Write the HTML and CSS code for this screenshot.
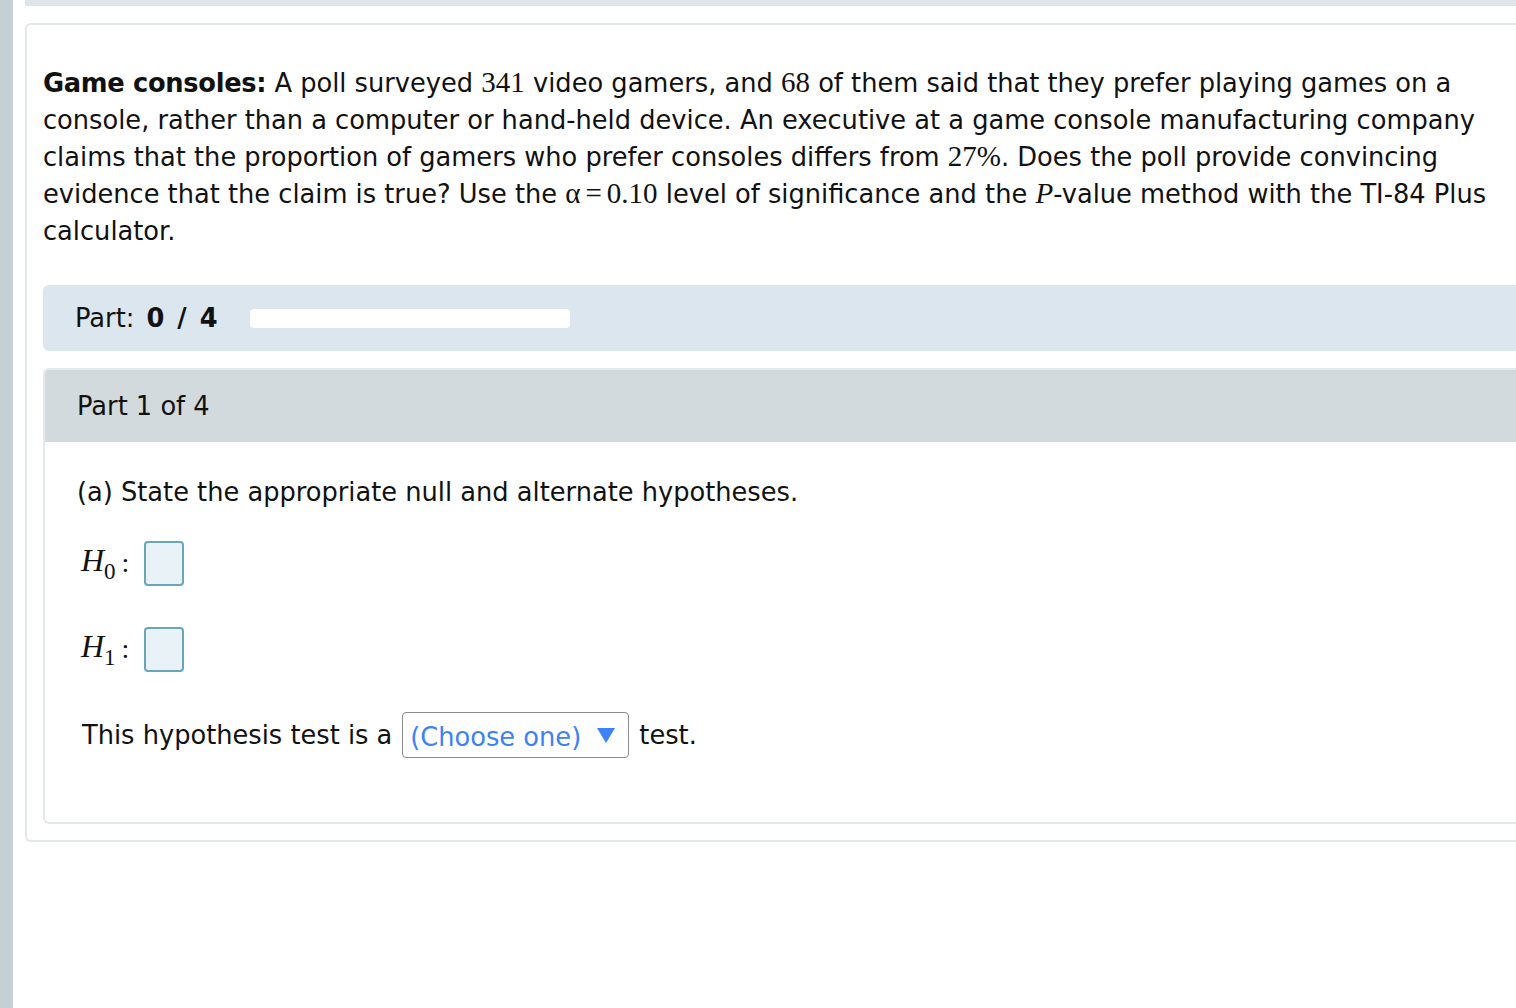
FILE: index.html
```html
<!DOCTYPE html>
<html>
<head>
<meta charset="utf-8">
<link rel="stylesheet" href="styles.css">
</head>
<body>
<div class="layout">
  <div class="sidebar"></div>
  <div class="main">
    <div class="topbar"></div>
    <div class="card">
      <p class="problem"><b>Game consoles:</b> A poll surveyed <span class="m">341</span> video gamers, and <span class="m">68</span> of them said that they prefer playing games on a console, rather than a computer or hand-held device. An executive at a game console manufacturing company claims that the proportion of gamers who prefer consoles differs from <span class="m">27%</span>. Does the poll provide convincing evidence that the claim is true? Use the <span class="m">α<span class="eq">=</span>0.10</span> level of significance and the <span class="m"><i>P</i></span>-value method with the TI-84 Plus calculator.</p>
      <div class="progress">
        <span class="plabel">Part: <b>0 / 4</b></span>
        <div class="pbar"></div>
      </div>
      <div class="partbox">
        <div class="parthead">Part 1 of 4</div>
        <div class="partbody">
          <p class="q">(a) State the appropriate null and alternate hypotheses.</p>
          <div class="hyp"><span class="m hv"><i>H</i><sub>0</sub></span><span class="m colon">:</span><span class="ansbox"></span></div>
          <div class="hyp"><span class="m hv"><i>H</i><sub>1</sub></span><span class="m colon">:</span><span class="ansbox"></span></div>
          <div class="testline">This hypothesis test is a <span class="select"><span class="seltext">(Choose one)</span><svg class="tri" width="18" height="16" viewBox="0 0 18 16"><polygon points="0,0 18,0 9,15" fill="#3d82f4"/></svg></span> test.</div>
        </div>
      </div>
    </div>
  </div>
</div>
</body>
</html>
```
FILE: styles.css
```css
html, body { margin: 0; padding: 0; background: #fff; }
body { font-family: "DejaVu Sans", Verdana, sans-serif; color: #111; }
.layout { display: flex; min-height: 1008px; }
.sidebar { width: 13px; background: #c5d0d5; flex: none; }
.main { flex: 1; padding-left: 12px; overflow: hidden; }
.topbar { height: 6px; background: #dee4e8; }
.card {
  margin-top: 17px;
  border: 2px solid #e3e8eb;
  border-right: none;
  border-radius: 6px 0 0 6px;
  padding: 0 0 16px 16px;
}
.problem {
  margin: 0;
  padding-top: 40px;
  font-size: 25.7px;
  line-height: 37px;
  width: 1475px;
}
.problem b { letter-spacing: -0.3px; }
.m { font-family: "Liberation Serif", "Times New Roman", serif; font-size: 29px; line-height: 1; }
.m i { font-style: italic; }
.eq { padding: 0 5px; }
.progress {
  margin-top: 35px;
  height: 66px;
  background: #dce6ee;
  border-radius: 6px 0 0 6px;
  display: flex;
  align-items: center;
  padding-left: 32px;
}
.plabel { font-size: 25.7px; }
.plabel b { font-weight: bold; word-spacing: 4px; margin-left: 4px; }
.pbar { width: 320px; height: 19px; background: #fff; border-radius: 4px; margin-left: 32px; }
.partbox {
  margin-top: 17px;
  border: 2px solid #e3e8eb;
  border-right: none;
  border-radius: 6px 0 0 6px;
  overflow: hidden;
}
.parthead {
  background: #d3dadd;
  height: 72px;
  display: flex;
  align-items: center;
  padding-left: 32px;
  font-size: 25.7px;
}
.partbody { padding: 34px 0 64px 32px; }
.q { margin: 0; font-size: 25.7px; line-height: 32px; }
.hyp { display: flex; align-items: center; margin-top: 32px; height: 46px; padding-left: 4px; }
.hyp + .hyp { margin-top: 40px; }
.hv { font-size: 32px; }
.hv sub { font-size: 23px; vertical-align: -8px; }
.colon { font-size: 28px; margin-left: 6px; margin-right: 15px; }
.ansbox {
  box-sizing: border-box;
  width: 40px; height: 45px;
  border: 2px solid #68a7b8;
  background: #e8f2f7;
  border-radius: 4px;
}
.testline { margin-top: 40px; font-size: 25.7px; padding-left: 5px; display: flex; align-items: center; height: 46px; }
.select {
  display: inline-flex;
  align-items: center;
  justify-content: space-between;
  box-sizing: border-box;
  width: 227px; height: 46px;
  border: 1.5px solid #8a8a8a;
  border-radius: 4px;
  margin: 0 10px 0 10px;
  padding: 0 13px 0 7px;
  color: #3d82f4;
  font-size: 25.7px;
}
.seltext { padding-top: 4px; }
.tri { display: block; margin-top: 2px; }
```
